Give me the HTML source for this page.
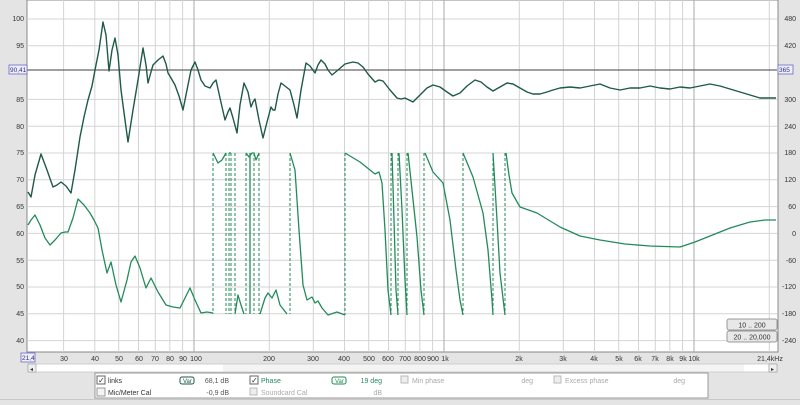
<!DOCTYPE html>
<html><head><meta charset="utf-8"><style>
body{margin:0;width:800px;height:405px;overflow:hidden;background:#e4e4e4;font-family:"Liberation Sans",sans-serif;}
</style></head><body>
<svg width="800" height="405" xmlns="http://www.w3.org/2000/svg" style="position:absolute;left:0;top:0" font-family="Liberation Sans" font-size="7" fill="#333">
<rect x="0" y="0" width="800" height="405" fill="#e4e4e4"/>
<rect x="27" y="0" width="751" height="352" fill="#fff" stroke="#888" stroke-width="1"/>
<g stroke="#d4d4d4" stroke-width="1">
<line x1="27" x2="777" y1="19" y2="19"/><line x1="27" x2="777" y1="45.8" y2="45.8"/><line x1="27" x2="777" y1="99.4" y2="99.4"/><line x1="27" x2="777" y1="126.2" y2="126.2"/><line x1="27" x2="777" y1="153" y2="153"/><line x1="27" x2="777" y1="179.8" y2="179.8"/><line x1="27" x2="777" y1="206.6" y2="206.6"/><line x1="27" x2="777" y1="233.4" y2="233.4"/><line x1="27" x2="777" y1="260.2" y2="260.2"/><line x1="27" x2="777" y1="287" y2="287"/><line x1="27" x2="777" y1="313.8" y2="313.8"/><line x1="27" x2="777" y1="340.6" y2="340.6"/>
<line x1="63.6" x2="63.6" y1="0" y2="352"/><line x1="94.8" x2="94.8" y1="0" y2="352"/><line x1="118.7" x2="118.7" y1="0" y2="352"/><line x1="138.5" x2="138.5" y1="0" y2="352"/><line x1="155.3" x2="155.3" y1="0" y2="352"/><line x1="169.8" x2="169.8" y1="0" y2="352"/><line x1="182.6" x2="182.6" y1="0" y2="352"/>
<line x1="269.3" x2="269.3" y1="0" y2="352"/><line x1="313.3" x2="313.3" y1="0" y2="352"/><line x1="344.5" x2="344.5" y1="0" y2="352"/><line x1="368.7" x2="368.7" y1="0" y2="352"/><line x1="388.5" x2="388.5" y1="0" y2="352"/><line x1="405.3" x2="405.3" y1="0" y2="352"/><line x1="419.8" x2="419.8" y1="0" y2="352"/><line x1="432.6" x2="432.6" y1="0" y2="352"/>
<line x1="519.3" x2="519.3" y1="0" y2="352"/><line x1="563.3" x2="563.3" y1="0" y2="352"/><line x1="594.5" x2="594.5" y1="0" y2="352"/><line x1="618.7" x2="618.7" y1="0" y2="352"/><line x1="638.5" x2="638.5" y1="0" y2="352"/><line x1="655.3" x2="655.3" y1="0" y2="352"/><line x1="669.8" x2="669.8" y1="0" y2="352"/><line x1="682.6" x2="682.6" y1="0" y2="352"/><line x1="769.3" x2="769.3" y1="0" y2="352"/>
</g>
<g stroke="#aaa"><line x1="194" x2="194" y1="0" y2="352"/><line x1="444" x2="444" y1="0" y2="352"/><line x1="694" x2="694" y1="0" y2="352"/></g>
<line x1="27" x2="777" y1="70" y2="70" stroke="#666" stroke-width="1.2"/>
<polyline fill="none" stroke="#1e5a44" stroke-width="1.4" stroke-linejoin="round" points="28,192 31,197 35,175 41,154 47,170 53,187 57,185 61,182 66,186 71,193 75,170 80,137 84,117 88,100 92,86 95,70 99,50 103,22 106,35 109,71 112,50 115,38 118,55 121,90 125,120 128,142 133,110 138,80 143,48 146,65 148,83 151,72 153,65 158,60 163,56 166,64 168,73 171,78 175,85 179,96 183,110 187,90 191,70 195,62 198,70 201,80 205,86 210,88 213,83 216,80 220,98 225,120 228,112 230,108 233,118 237,133 240,105 244,83 248,92 251,107 253,102 255,99 259,120 263,138 267,122 271,107 273,110 275,110 278,94 281,83 285,86 290,90 294,105 297,118 301,90 306,63 310,66 315,73 318,65 321,60 325,64 328,70 332,75 338,70 345,64 353,62 358,63 363,67 368,74 375,82 379,80 383,81 390,90 397,98 401,99 405,98 409,100 413,102 420,95 427,88 433,85 440,87 447,92 453,96 460,93 467,86 475,80 481,82 487,87 493,91 500,87 507,83 513,84 520,88 527,92 533,94 540,94 547,92 553,90 560,88 570,87 580,88 590,86 600,84 610,88 620,90 630,88 640,88 650,86 660,88 670,89 680,87 690,88 700,86 710,84 720,86 730,89 740,92 750,95 760,98 770,98 776,98"/>
<polyline fill="none" stroke="#228b5a" stroke-width="1.3" stroke-linejoin="round" points="28,225 31,220 35,215 40,225 45,238 50,245 55,240 61,233 65,232 68,232 73,218 78,199 84,205 90,213 94,220 98,228 102,250 107,273 111,262 116,285 121,302 127,280 131,262 135,256 140,268 146,288 149,282 151,278 158,292 166,305 173,307 180,308 185,298 190,288 195,300 201,313 207,312 213,313"/>
<g fill="none" stroke="#228b5a" stroke-width="1.3" stroke-linejoin="round">
<polyline points="213,153 218,163 222,160 226,153"/>
<polyline points="229,153 231,153"/>
<polyline points="235,314 238,295 241,305 244,314"/>
<polyline points="246,153 249,157 252,153 254,153 256,160 259,153"/>
<polyline points="260,314 265,298 268,293 272,298 276,290 280,305 287,314"/>
<polyline points="290,153 295,170 299,230 303,285 307,300 312,297 315,303 318,301 322,308 328,315 337,312 345,315"/>
<polyline points="345,153 360,162 370,170 375,174 379,172 382,183 385,230 388,290 391,315"/>
<polyline points="392,153 394,220 396,290 398,315"/>
<polyline points="399,153 402,210 405,280 407,315"/>
<polyline points="408,153 412,190 417,237 421,290 424,315"/>
<polyline points="425,153 433,172 443,183 450,220 456,270 460,300 463,315"/>
<polyline points="463,153 473,177 483,213 488,250 492,300 493,315"/>
<polyline points="493,153 497,220 500,273 505,315"/>
<polyline points="506,153 509,175 512,193 520,207 537,213 560,227 580,236 600,240 625,244 650,246 680,247 695,242 710,236 730,228 750,222 765,220 776,220"/>
</g>
<g stroke="#228b5a" stroke-width="1" stroke-dasharray="3,2">
<line x1="213" x2="213" y1="153" y2="314"/><line x1="226" x2="226" y1="153" y2="314"/><line x1="229" x2="229" y1="153" y2="314"/><line x1="231" x2="231" y1="153" y2="314"/><line x1="235" x2="235" y1="153" y2="314"/><line x1="246" x2="246" y1="153" y2="314"/><line x1="254" x2="254" y1="153" y2="314"/><line x1="259" x2="259" y1="153" y2="314"/><line x1="290" x2="290" y1="153" y2="314"/><line x1="345" x2="345" y1="153" y2="315"/><line x1="391" x2="391" y1="153" y2="315"/><line x1="398" x2="398" y1="153" y2="315"/><line x1="407" x2="407" y1="153" y2="315"/><line x1="424" x2="424" y1="153" y2="315"/><line x1="463" x2="463" y1="153" y2="315"/><line x1="493" x2="493" y1="153" y2="315"/><line x1="505" x2="505" y1="153" y2="315"/>
</g>
<line x1="250" x2="250" y1="153" y2="314" stroke="#228b5a" stroke-width="1.3"/>
<g text-anchor="end">
<text x="24" y="21">100</text><text x="24" y="48">95</text><text x="24" y="102">85</text><text x="24" y="129">80</text><text x="24" y="155">75</text><text x="24" y="182">70</text><text x="24" y="209">65</text><text x="24" y="236">60</text><text x="24" y="263">55</text><text x="24" y="289">50</text><text x="24" y="316">45</text><text x="24" y="343">40</text>
</g>
<g text-anchor="end">
<text x="796" y="21">480</text><text x="796" y="48">420</text><text x="796" y="102">300</text><text x="796" y="129">240</text><text x="796" y="155">180</text><text x="796" y="182">120</text><text x="796" y="209">60</text><text x="796" y="236">0</text><text x="796" y="263">-60</text><text x="796" y="289">-120</text><text x="796" y="316">-180</text><text x="796" y="343">-240</text>
</g>
<rect x="9" y="65" width="18" height="9" fill="#eef" stroke="#66c" stroke-width="0.8"/><text x="10" y="72" fill="#336" font-size="6.5">90,41</text>
<rect x="778" y="65" width="15" height="9" fill="#eef" stroke="#66c" stroke-width="0.8"/><text x="779" y="72" fill="#336" font-size="6.5">365</text>
<rect x="21" y="353" width="14" height="9" fill="#eef" stroke="#66c" stroke-width="0.8"/><text x="22" y="360" fill="#336" font-size="6.5">21,4</text>
<g text-anchor="middle">
<text x="64" y="361">30</text><text x="95" y="361">40</text><text x="119" y="361">50</text><text x="139" y="361">60</text><text x="155" y="361">70</text><text x="170" y="361">80</text><text x="183" y="361">90</text><text x="196" y="361">100</text>
<text x="269" y="361">200</text><text x="313" y="361">300</text><text x="344" y="361">400</text><text x="369" y="361">500</text><text x="388" y="361">600</text><text x="405" y="361">700</text><text x="420" y="361">800</text><text x="433" y="361">900</text><text x="445" y="361">1k</text>
<text x="519" y="361">2k</text><text x="563" y="361">3k</text><text x="594" y="361">4k</text><text x="619" y="361">5k</text><text x="638" y="361">6k</text><text x="655" y="361">7k</text><text x="670" y="361">8k</text><text x="683" y="361">9k</text><text x="694" y="361">10k</text><text x="770" y="361">21,4kHz</text>
</g>
<rect x="727" y="319" width="50" height="11" rx="2" fill="#e8e8e8" stroke="#999"/><text x="752" y="327.5" text-anchor="middle">10 .. 200</text>
<rect x="727" y="331" width="50" height="11" rx="2" fill="#e8e8e8" stroke="#999"/><text x="752" y="339.5" text-anchor="middle">20 .. 20,000</text>
<rect x="28" y="364" width="749" height="8" fill="#f4f4f4" stroke="#bbb" stroke-width="0.6"/>
<rect x="36" y="364.5" width="187" height="7" fill="#fff"/><rect x="744" y="364.5" width="24" height="7" fill="#fff"/>
<rect x="28" y="364" width="8" height="8" fill="#eee" stroke="#999" stroke-width="0.6"/><text x="30" y="371" font-size="6">◂</text>
<rect x="769" y="364" width="8" height="8" fill="#eee" stroke="#999" stroke-width="0.6"/><text x="771" y="371" font-size="6">▸</text>
<rect x="95" y="373" width="613" height="25" fill="#fff" stroke="#999"/>
<line x1="0" x2="800" y1="399.5" y2="399.5" stroke="#c8c8c8"/>
<rect x="97" y="376" width="8" height="8" fill="#fff" stroke="#666"/><text x="98" y="383" font-size="8">✓</text><text x="108" y="383">links</text>
<rect x="180" y="377" width="14" height="7" rx="2" fill="#fff" stroke="#1e5a44"/><text x="183" y="383" font-size="6" fill="#1e5a44">Var</text>
<text x="229" y="383" text-anchor="end" fill="#555">68,1 dB</text>
<rect x="250" y="376" width="8" height="8" fill="#fff" stroke="#666"/><text x="251" y="383" font-size="8">✓</text><text x="261" y="383" fill="#228b5a">Phase</text>
<rect x="332" y="377" width="14" height="7" rx="2" fill="#fff" stroke="#228b5a"/><text x="335" y="383" font-size="6" fill="#228b5a">Var</text>
<text x="382" y="383" text-anchor="end" fill="#228b5a">19 deg</text>
<rect x="401" y="376" width="7" height="7" fill="#eee" stroke="#bbb"/><text x="412" y="383" fill="#aaa">Min phase</text><text x="533" y="383" text-anchor="end" fill="#aaa">deg</text>
<rect x="554" y="376" width="7" height="7" fill="#eee" stroke="#bbb"/><text x="565" y="383" fill="#aaa">Excess phase</text><text x="685" y="383" text-anchor="end" fill="#aaa">deg</text>
<rect x="97" y="388" width="8" height="8" fill="#f4f4f4" stroke="#999"/><text x="108" y="395">Mic/Meter Cal</text>
<text x="229" y="395" text-anchor="end" fill="#555">-0,9 dB</text>
<rect x="250" y="388" width="7" height="7" fill="#eee" stroke="#bbb"/><text x="261" y="395" fill="#aaa">Soundcard Cal</text><text x="382" y="395" text-anchor="end" fill="#aaa">dB</text>
</svg>
</body></html>
